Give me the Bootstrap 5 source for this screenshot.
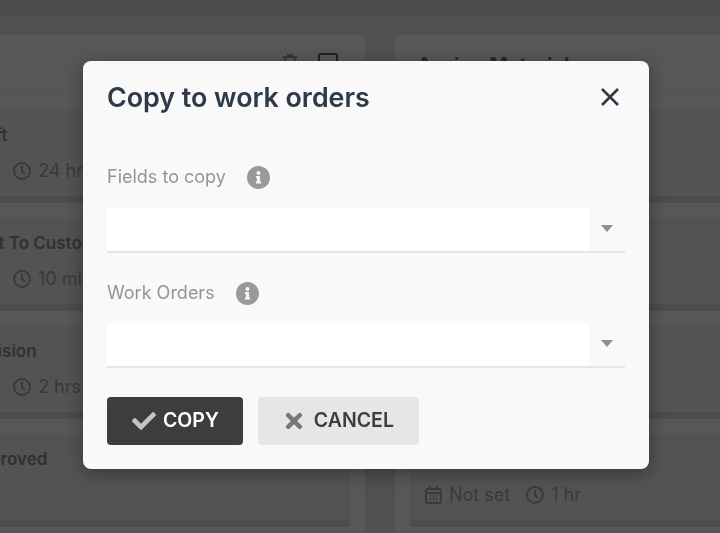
<!DOCTYPE html>
<html lang="en">
<head>
    <meta charset="UTF-8">
    <meta name="viewport" content="width=device-width, initial-scale=1.0">
    <title>Copy to work orders</title>
    <link rel="stylesheet" href="https://cdn.jsdelivr.net/npm/bootstrap@5.3.0/dist/css/bootstrap.min.css">
    <style>
        html, body { height: 100%; overflow: hidden; }
        body { font-family: "Inter", "Liberation Sans", sans-serif; background: #9ca0a5; color: #5c6470; }

        /* page behind the dialog */
        .top-strip { height: 17px; background: #969a98; }
        .board { margin-top: 18px; margin-left: -63px; width: 950px; }
        .board-col { flex: 0 0 428px; height: 520px; background: #aeaeae; padding: 0 15px; }
        .col-spacer { flex: 0 0 30px; }
        .col-head { height: 60px; margin: 0 -15px; padding: 18px 15px 0 22px; border-bottom: 1px solid #a4a4a4; font-size: 20px; font-weight: 700; line-height: 24px; color: #4c525b; }
        .col-tools { gap: 20px; padding-right: 12px; margin-top: 0; }
        .job-card { margin-top: 15px; height: 93px; background: #a6a6a6; border-bottom: 7px solid #989898; padding: 13px 15px 0; white-space: nowrap; }
        .job-title { font-size: 17px; font-weight: 600; line-height: 24px; }
        .job-meta { margin-top: 12px; margin-left: 46px; font-size: 18px; line-height: 24px; color: #6e747c; gap: 7px; }
        .right-meta { margin-top: 36px; margin-left: 0; }
        .date-text { margin-right: 9px; }

        /* dialog */
        .copy-dialog { max-width: none; width: 566px; margin: 61px 0 0 83px; }
        .copy-dialog .modal-content { background: #f9f9f9; border: 0; border-radius: 8px; box-shadow: 0 4px 18px rgba(0, 0, 0, .35); height: 408px; }
        .copy-dialog .modal-header { padding: 20px 24px; height: 72px; }
        .copy-dialog .modal-title { font-size: 26.8px; font-weight: 600; line-height: 32px; color: #2d3a4a; }
        .close-x { background: none; border: 0; padding: 0; width: 26px; height: 26px; margin: -2px 2px 0 0; }
        .copy-dialog .modal-body { padding: 32px 24px 0; flex: 0 0 auto; }
        .field-label { font-size: 18px; line-height: 24px; color: #8f959d; margin: 0; gap: 21px; }
        .second-label { margin-top: 28px; }
        .info-dot { width: 23px; height: 23px; fill: #999; display: block; }
        .pick-box { border-bottom: 2px solid #e5e5e7; height: 45px; margin-top: 19px; }
        .second-label + .pick-box { margin-top: 18px; }
        .pick-box .form-control { height: 43px; border: 0; border-radius: 0; background: #fff; }
        .pick-arrow { flex: 0 0 36px; height: 41px; }
        .pick-arrow i { display: block; width: 0; border: 6px solid transparent; border-top: 7px solid #8b9199; border-bottom: 0; margin: 0 auto; }
        .copy-dialog .modal-footer { padding: 0 24px; margin-top: 29px; border: 0; gap: 15px; justify-content: flex-start; }
        .act-btn { margin: 0 !important; height: 48px; padding: 0 24px 0 25px; border: 0; border-radius: 4px; font-size: 19.5px; font-weight: 600; gap: 7px; }
        .act-copy, .act-copy:hover { background: #3d3d3d; color: #fff; }
        .act-cancel, .act-cancel:hover { background: #e6e6e6; color: #3d3d3d; padding: 0 25px 0 27px; gap: 11px; }
        .modal-backdrop.show { opacity: .5; }
    </style>
</head>
<body>
<div class="top-strip"></div>

<div class="board d-flex">
    <div class="board-col">
        <div class="col-head d-flex justify-content-end">
            <div class="col-tools d-flex align-items-start">
                <svg width="16" height="18" viewBox="0 0 16 18" fill="none" stroke="#6e6e6e" stroke-width="2"><path d="M1 4h14M6 4V2h4v2M3 4l1 13h8l1-13"/></svg>
                <svg width="20" height="20" viewBox="0 0 20 20" fill="none" stroke="#3e4652" stroke-width="2"><rect x="1" y="1" width="18" height="18" rx="2"/></svg>
            </div>
        </div>
        <div class="job-card">
            <div class="job-title">Draft</div>
            <div class="job-meta d-flex align-items-center">
                <svg width="18" height="18" viewBox="0 0 18 18" fill="none" stroke="#6e747c" stroke-width="2"><circle cx="9" cy="9" r="8"/><path d="M9 4v5l3 3"/></svg>24 hrs
            </div>
        </div>
        <div class="job-card">
            <div class="job-title">Sent To Customer</div>
            <div class="job-meta d-flex align-items-center">
                <svg width="18" height="18" viewBox="0 0 18 18" fill="none" stroke="#6e747c" stroke-width="2"><circle cx="9" cy="9" r="8"/><path d="M9 4v5l3 3"/></svg>10 mins
            </div>
        </div>
        <div class="job-card">
            <div class="job-title">Revision</div>
            <div class="job-meta d-flex align-items-center">
                <svg width="18" height="18" viewBox="0 0 18 18" fill="none" stroke="#6e747c" stroke-width="2"><circle cx="9" cy="9" r="8"/><path d="M9 4v5l3 3"/></svg>2 hrs
            </div>
        </div>
        <div class="job-card">
            <div class="job-title">Approved</div>
        </div>
    </div>

    <div class="col-spacer"></div>

    <div class="board-col">
        <div class="col-head">Assign Materials</div>
        <div class="job-card"></div>
        <div class="job-card"></div>
        <div class="job-card"></div>
        <div class="job-card">
            <div class="job-meta right-meta d-flex align-items-center">
                <svg width="17" height="18" viewBox="0 0 17 18" fill="none" stroke="#6e747c" stroke-width="2"><rect x="1" y="3" width="15" height="14" rx="2"/><path d="M1 7h15M5 0v4M12 0v4M5 10h1M8 10h1M11 10h1M5 13h1M8 13h1M11 13h1"/></svg>
                <span class="date-text">Not set</span>
                <svg width="18" height="18" viewBox="0 0 18 18" fill="none" stroke="#6e747c" stroke-width="2"><circle cx="9" cy="9" r="8"/><path d="M9 4v5l3 3"/></svg>1 hr
            </div>
        </div>
    </div>
</div>

<div class="modal-backdrop show"></div>

<div class="modal d-block" tabindex="-1">
    <div class="modal-dialog copy-dialog">
        <div class="modal-content">
            <div class="modal-header border-0">
                <h5 class="modal-title">Copy to work orders</h5>
                <button type="button" class="close-x ms-auto" aria-label="Close">
                    <svg width="26" height="26" viewBox="0 0 26 26" fill="none" stroke="#2d3a4a" stroke-width="2.6"><path d="M5 5l16 16M21 5L5 21"/></svg>
                </button>
            </div>
            <div class="modal-body">
                <div class="field-label d-flex align-items-center">
                    Fields to copy
                    <svg class="info-dot" viewBox="8 8 496 496"><path d="M256 8C119.043 8 8 119.083 8 256c0 136.997 111.043 248 248 248s248-111.003 248-248C504 119.083 392.957 8 256 8zm0 110c23.196 0 42 18.804 42 42s-18.804 42-42 42-42-18.804-42-42 18.804-42 42-42zm56 254c0 6.627-5.373 12-12 12h-88c-6.627 0-12-5.373-12-12v-24c0-6.627 5.373-12 12-12h12v-64h-12c-6.627 0-12-5.373-12-12v-24c0-6.627 5.373-12 12-12h64c6.627 0 12 5.373 12 12v100h12c6.627 0 12 5.373 12 12v24z"/></svg>
                </div>
                <div class="pick-box d-flex align-items-start">
                    <input type="text" class="form-control">
                    <div class="pick-arrow d-flex align-items-center"><i></i></div>
                </div>
                <div class="field-label d-flex align-items-center second-label">
                    Work Orders
                    <svg class="info-dot" viewBox="8 8 496 496"><path d="M256 8C119.043 8 8 119.083 8 256c0 136.997 111.043 248 248 248s248-111.003 248-248C504 119.083 392.957 8 256 8zm0 110c23.196 0 42 18.804 42 42s-18.804 42-42 42-42-18.804-42-42 18.804-42 42-42zm56 254c0 6.627-5.373 12-12 12h-88c-6.627 0-12-5.373-12-12v-24c0-6.627 5.373-12 12-12h12v-64h-12c-6.627 0-12-5.373-12-12v-24c0-6.627 5.373-12 12-12h64c6.627 0 12 5.373 12 12v100h12c6.627 0 12 5.373 12 12v24z"/></svg>
                </div>
                <div class="pick-box d-flex align-items-start">
                    <input type="text" class="form-control">
                    <div class="pick-arrow d-flex align-items-center"><i></i></div>
                </div>
            </div>
            <div class="modal-footer">
                <button type="button" class="btn act-btn act-copy d-flex align-items-center">
                    <svg width="24" height="24" viewBox="0 0 512 512" fill="#c4c4c4"><path d="M173.898 439.404l-166.4-166.4c-9.997-9.997-9.997-26.206 0-36.204l36.203-36.204c9.997-9.998 26.207-9.998 36.204 0L192 312.69 432.095 72.596c9.997-9.997 26.207-9.997 36.204 0l36.203 36.204c9.997 9.997 9.997 26.206 0 36.204l-294.4 294.401c-9.998 9.997-26.207 9.997-36.204-.001z"/></svg>
                    COPY
                </button>
                <button type="button" class="btn act-btn act-cancel d-flex align-items-center">
                    <svg width="18" height="24" viewBox="0 0 352 512" fill="#777"><path d="M242.72 256l100.07-100.07c12.28-12.28 12.28-32.19 0-44.48l-22.24-22.24c-12.28-12.28-32.19-12.28-44.48 0L176 189.28 75.93 89.21c-12.28-12.28-32.19-12.28-44.48 0L9.21 111.45c-12.28 12.28-12.28 32.19 0 44.48L109.28 256 9.21 356.07c-12.28 12.28-12.28 32.19 0 44.48l22.24 22.24c12.28 12.28 32.2 12.28 44.48 0L176 322.72l100.07 100.07c12.28 12.28 32.2 12.28 44.48 0l22.24-22.24c12.28-12.28 12.28-32.19 0-44.48L242.72 256z"/></svg>
                    CANCEL
                </button>
            </div>
        </div>
    </div>
</div>

<script src="https://cdn.jsdelivr.net/npm/bootstrap@5.3.0/dist/js/bootstrap.bundle.min.js"></script>
</body>
</html>
